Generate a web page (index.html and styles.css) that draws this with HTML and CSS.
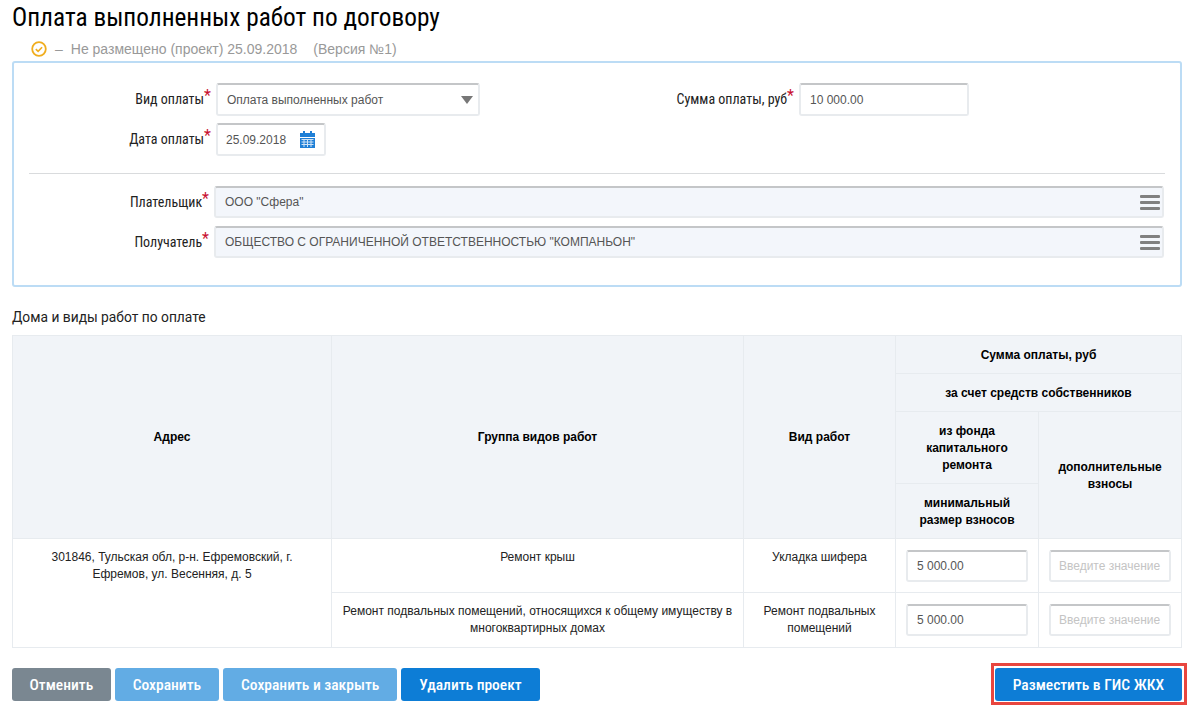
FILE: index.html
```html
<!DOCTYPE html>
<html lang="ru">
<head>
    <meta charset="UTF-8">
    <title>Оплата выполненных работ по договору</title>
    <link rel="stylesheet" href="styles.css">
</head>
<body>
    <h1 class="page-title">Оплата выполненных работ по договору</h1>
    <div class="status">
        <svg class="status-icon" width="16" height="16" viewBox="0 0 16 16">
            <circle cx="8" cy="8" r="6.8" fill="none" stroke="#f0ad1e" stroke-width="1.8"/>
            <path d="M4.8 8.2l2.3 2.2 4-4.2" fill="none" stroke="#f0ad1e" stroke-width="1.6"/>
        </svg>
        <span class="status-dash">–</span>
        <span>Не размещено (проект) 25.09.2018</span>
        <span class="status-version">(Версия №1)</span>
    </div>

    <div class="panel">
        <div class="row">
            <div class="label label-main">Вид оплаты<i>*</i></div>
            <div class="control select-control">
                <span>Оплата выполненных работ</span>
                <span class="arrow"></span>
            </div>
            <div class="label label-sum">Сумма оплаты, руб<i>*</i></div>
            <div class="control sum-control">10 000.00</div>
        </div>
        <div class="row">
            <div class="label label-main">Дата оплаты<i>*</i></div>
            <div class="control date-control">
                <span>25.09.2018</span>
                <svg width="15" height="17" viewBox="0 0 15 17">
                    <path d="M0 2h3V0h2v2h5V0h2v2h3v4H0z" fill="#1f7fd6"/>
                    <path d="M0 7h15v10H0z" fill="#1f7fd6"/>
                    <path d="M1.500 8.500h12M1.500 11h12M1.500 13.500h12M4 8v8M7.500 8v8M11 8v8" stroke="#cfe3f7" stroke-width="1" fill="none"/>
                </svg>
            </div>
        </div>
        <div class="divider"></div>
        <div class="row row-wide">
            <div class="label label-party">Плательщик<i>*</i></div>
            <div class="control party-control">
                <span>ООО "Сфера"</span>
                <span class="burger"><b></b><b></b><b></b></span>
            </div>
        </div>
        <div class="row row-wide">
            <div class="label label-party">Получатель<i>*</i></div>
            <div class="control party-control">
                <span>ОБЩЕСТВО С ОГРАНИЧЕННОЙ ОТВЕТСТВЕННОСТЬЮ "КОМПАНЬОН"</span>
                <span class="burger"><b></b><b></b><b></b></span>
            </div>
        </div>
    </div>

    <h2 class="section-title">Дома и виды работ по оплате</h2>

    <table class="works">
        <colgroup>
            <col class="col-address">
            <col class="col-group">
            <col class="col-type">
            <col class="col-fund">
            <col class="col-extra">
        </colgroup>
        <thead>
            <tr class="h38">
                <th rowspan="4">Адрес</th>
                <th rowspan="4">Группа видов работ</th>
                <th rowspan="4">Вид работ</th>
                <th class="th-low" colspan="2">Сумма оплаты, руб</th>
            </tr>
            <tr class="h38">
                <th class="th-low" colspan="2">за счет средств собственников</th>
            </tr>
            <tr class="h72">
                <th class="th-low">из фонда капитального ремонта</th>
                <th class="th-low" rowspan="2">дополнительные взносы</th>
            </tr>
            <tr class="h55">
                <th class="th-low">минимальный размер взносов</th>
            </tr>
        </thead>
        <tbody>
            <tr class="h54">
                <td rowspan="2">301846, Тульская обл, р-н. Ефремовский, г. Ефремов, ул. Весенняя, д. 5</td>
                <td>Ремонт крыш</td>
                <td>Укладка шифера</td>
                <td class="cell-input"><div class="control cell-control">5 000.00</div></td>
                <td class="cell-input"><div class="control cell-control placeholder">Введите значение</div></td>
            </tr>
            <tr class="h55">
                <td>Ремонт подвальных помещений, относящихся к общему имуществу в многоквартирных домах</td>
                <td>Ремонт подвальных помещений</td>
                <td class="cell-input"><div class="control cell-control">5 000.00</div></td>
                <td class="cell-input"><div class="control cell-control placeholder">Введите значение</div></td>
            </tr>
        </tbody>
    </table>

    <div class="actions">
        <button class="btn btn-grey">Отменить</button>
        <button class="btn btn-light">Сохранить</button>
        <button class="btn btn-light">Сохранить и закрыть</button>
        <button class="btn btn-blue">Удалить проект</button>
        <div class="publish-frame">
            <button class="btn btn-blue btn-publish">Разместить в ГИС ЖКХ</button>
        </div>
    </div>
</body>
</html>
```

FILE: styles.css
```css
body {
    margin: 0;
    padding: 0 11px 0 12px;
    background-color: white;
    color: black;
    font-family: "Liberation Sans", Arial, sans-serif;
    font-size: 12px;
    overflow: hidden;
}
.page-title {
    margin: 0;
    padding-top: 3px;
    height: 33px;
    font-family: "Roboto Condensed", "Liberation Sans Narrow", Roboto, sans-serif;
    font-size: 25.3px;
    line-height: 30px;
    font-weight: 400;
}
.status {
    display: flex;
    align-items: center;
    height: 25px;
    padding-left: 19px;
    box-sizing: border-box;
    color: #999;
    font-size: 14px;
}
.status-dash {
    margin: 0 8px 0 8px;
}
.status-version {
    margin-left: 16px;
}
.panel {
    box-sizing: border-box;
    height: 226px;
    padding: 20px 15px 0;
    border: 2px solid #bcdcf5;
    border-radius: 3px;
}
.row {
    display: flex;
    align-items: flex-start;
    height: 40px;
}
.row-wide {
    padding-right: 1px;
}
.label {
    box-sizing: border-box;
    flex: none;
    padding-right: 5px;
    padding-top: 7px;
    text-align: right;
    font-family: "Roboto Condensed", "Liberation Sans Narrow", Roboto, sans-serif;
    font-size: 14px;
    line-height: 18px;
    color: #222;
}
.label i {
    color: #c8102e;
    font-style: normal;
    font-size: 16px;
    line-height: 10px;
    vertical-align: 3px;
}
.label-main {
    width: 187px;
}
.label-party {
    width: 185px;
}
.label-sum {
    width: 319px;
}
.control {
    box-sizing: border-box;
    display: flex;
    align-items: center;
    height: 33px;
    padding: 0 9px;
    border: 2px solid #e8ebee;
    border-top-color: #c4c6c8;
    border-radius: 3px;
    background-color: white;
    color: #555;
    font-size: 12px;
}
.select-control {
    justify-content: space-between;
    width: 264px;
    padding-right: 5px;
}
.arrow {
    width: 0;
    height: 0;
    border-left: 6px solid transparent;
    border-right: 6px solid transparent;
    border-top: 8px solid #777;
}
.sum-control {
    width: 170px;
}
.date-control {
    justify-content: space-between;
    width: 110px;
    padding: 0 9px 0 8px;
}
.divider {
    height: 1px;
    margin: 10px 0 12px;
    background-color: #d9dbdd;
}
.party-control {
    flex: 1;
    justify-content: space-between;
    height: 32px;
    background-color: #f3f6fb;
    padding-right: 2px;
}
.burger {
    display: flex;
    flex-direction: column;
    gap: 3px;
}
.burger b {
    display: block;
    width: 20px;
    height: 3px;
    border-radius: 1px;
    background-color: #808080;
}
.section-title {
    margin: 20px 0 8px;
    font-family: Roboto, sans-serif;
    font-size: 13.8px;
    line-height: 20px;
    font-weight: 400;
    color: #222;
}
.works {
    width: 100%;
    table-layout: fixed;
    border-collapse: collapse;
    font-size: 12px;
    line-height: 17px;
}
.col-address { width: 319px; }
.col-group { width: 412px; }
.col-type { width: 152px; }
.col-fund { width: 143px; }
.works th,
.works td {
    padding: 0 10px;
    border: 1px solid #e7ebef;
    text-align: center;
}
.works th {
    background-color: #f1f4f8;
    font-weight: bold;
}
.works th.th-low {
    padding-top: 2px;
}
.works td {
    padding-top: 10px;
    vertical-align: top;
    color: #222;
}
.h38 { height: 38px; }
.h72 { height: 72px; }
.h55 { height: 55px; }
.h54 { height: 54px; }
.works td.cell-input {
    padding: 11px 10px 0;
}
.cell-control {
    height: 32px;
}
.placeholder {
    padding: 0 8px;
    color: #c4c4c4;
    white-space: nowrap;
}
.actions {
    display: flex;
    align-items: flex-start;
    gap: 4px;
    margin-top: 20px;
}
.btn {
    height: 33px;
    padding: 0 18px;
    border: none;
    border-radius: 3px;
    color: white;
    font-family: "Roboto Condensed", "Liberation Sans Narrow", Roboto, sans-serif;
    font-size: 15.5px;
    font-weight: 500;
}
.btn-grey {
    padding: 0 17.5px;
    background-color: #7a8791;
}
.btn-light { background-color: #62ace4; }
.btn-blue { background-color: #0d7dd6; }
.publish-frame {
    margin: -5px -5px 0 auto;
    padding: 2px 2px 1px 1px;
    border: 3px solid #e8463f;
}
.btn-publish {
    display: block;
}
```
